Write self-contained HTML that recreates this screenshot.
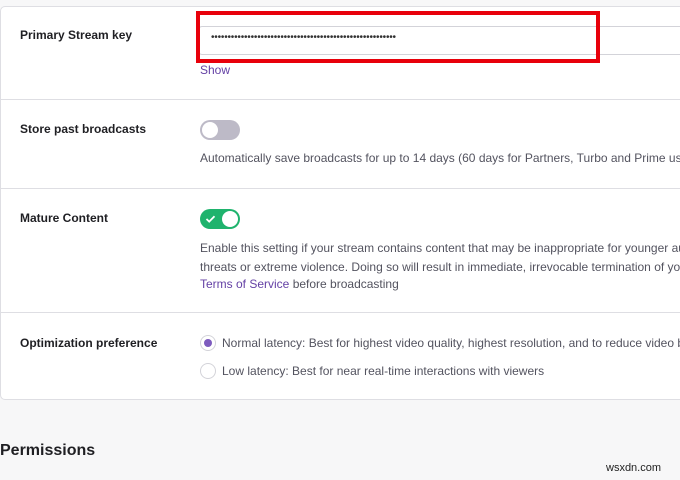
<!DOCTYPE html>
<html><head><style>
html,body{margin:0;width:680px;height:480px;overflow:hidden}
body{background:#f7f7f8;font-family:"Liberation Sans",Arial,sans-serif;position:relative;color:#0e0e10}
.card{position:absolute;left:0;top:6px;width:685px;height:394px;background:#fff;border:1px solid #dedee3;border-radius:5px;box-sizing:border-box}
.a{position:absolute;font-size:12px;white-space:nowrap;overflow:hidden}
.p{color:#53535f;width:480px}
.lbl{font-weight:bold;font-size:12px;color:#1f1f23}
.hr{position:absolute;left:0;width:680px;height:1px;background:#dedee3}
.link{color:#6441a5}
</style></head><body>
<div class="card"></div>
<div class="a lbl" style="left:20px;top:28px">Primary Stream key</div>
<div style="position:absolute;left:198px;top:26px;width:490px;height:29px;border:1px solid #d3d3d9;border-radius:4px;box-sizing:border-box;background:#fff"></div>
<div class="a" style="left:211px;top:32px;font-size:10px;letter-spacing:-0.2px;color:#333">••••••••••••••••••••••••••••••••••••••••••••••••••••••••</div>
<div style="position:absolute;left:196px;top:11px;width:404px;height:52px;border:4px solid #e8000b;box-sizing:border-box"></div>
<div class="a link" style="left:200px;top:63px">Show</div>
<div class="hr" style="top:99px"></div>
<div class="a lbl" style="left:20px;top:122px">Store past broadcasts</div>
<div style="position:absolute;left:200px;top:120px;width:40px;height:20px;border-radius:10px;background:#bdbac7"></div>
<div style="position:absolute;left:202px;top:122px;width:16px;height:16px;border-radius:8px;background:#fff"></div>
<div class="a p" style="left:200px;top:151px">Automatically save broadcasts for up to 14 days (60 days for Partners, Turbo and Prime users)</div>
<div class="hr" style="top:188px"></div>
<div class="a lbl" style="left:20px;top:211px">Mature Content</div>
<div style="position:absolute;left:200px;top:209px;width:40px;height:20px;border-radius:10px;background:#1fb36d"></div>
<div style="position:absolute;left:222px;top:211px;width:16px;height:16px;border-radius:8px;background:#fff"></div>
<svg style="position:absolute;left:205px;top:214px" width="11" height="10"><path d="M1.5 5 L4.2 7.6 L9.5 2.2" stroke="#fff" stroke-width="1.8" fill="none"/></svg>
<div class="a p" style="left:200px;top:241px">Enable this setting if your stream contains content that may be inappropriate for younger audiences</div>
<div class="a p" style="left:200px;top:260px">threats or extreme violence. Doing so will result in immediate, irrevocable termination of your account</div>
<div class="a p" style="left:200px;top:277px"><span class="link">Terms of Service</span> before broadcasting</div>
<div class="hr" style="top:312px"></div>
<div class="a lbl" style="left:20px;top:336px">Optimization preference</div>
<div style="position:absolute;left:200px;top:335px;width:16px;height:16px;border-radius:8px;border:1px solid #d3d3d9;box-sizing:border-box;background:#fff"></div>
<div style="position:absolute;left:204px;top:339px;width:8px;height:8px;border-radius:4px;background:#7d5bbe"></div>
<div class="a p" style="left:222px;top:336px;width:458px">Normal latency: Best for highest video quality, highest resolution, and to reduce video buffering</div>
<div style="position:absolute;left:200px;top:363px;width:16px;height:16px;border-radius:8px;border:1px solid #d3d3d9;box-sizing:border-box;background:#fff"></div>
<div class="a p" style="left:222px;top:364px">Low latency: Best for near real-time interactions with viewers</div>
<div class="a" style="left:0;top:442px;font-size:16px;font-weight:bold;color:#1f1f23">Permissions</div>
<div class="a" style="left:606px;top:462px;font-size:11px;color:#222">wsxdn.com</div>
</body></html>
